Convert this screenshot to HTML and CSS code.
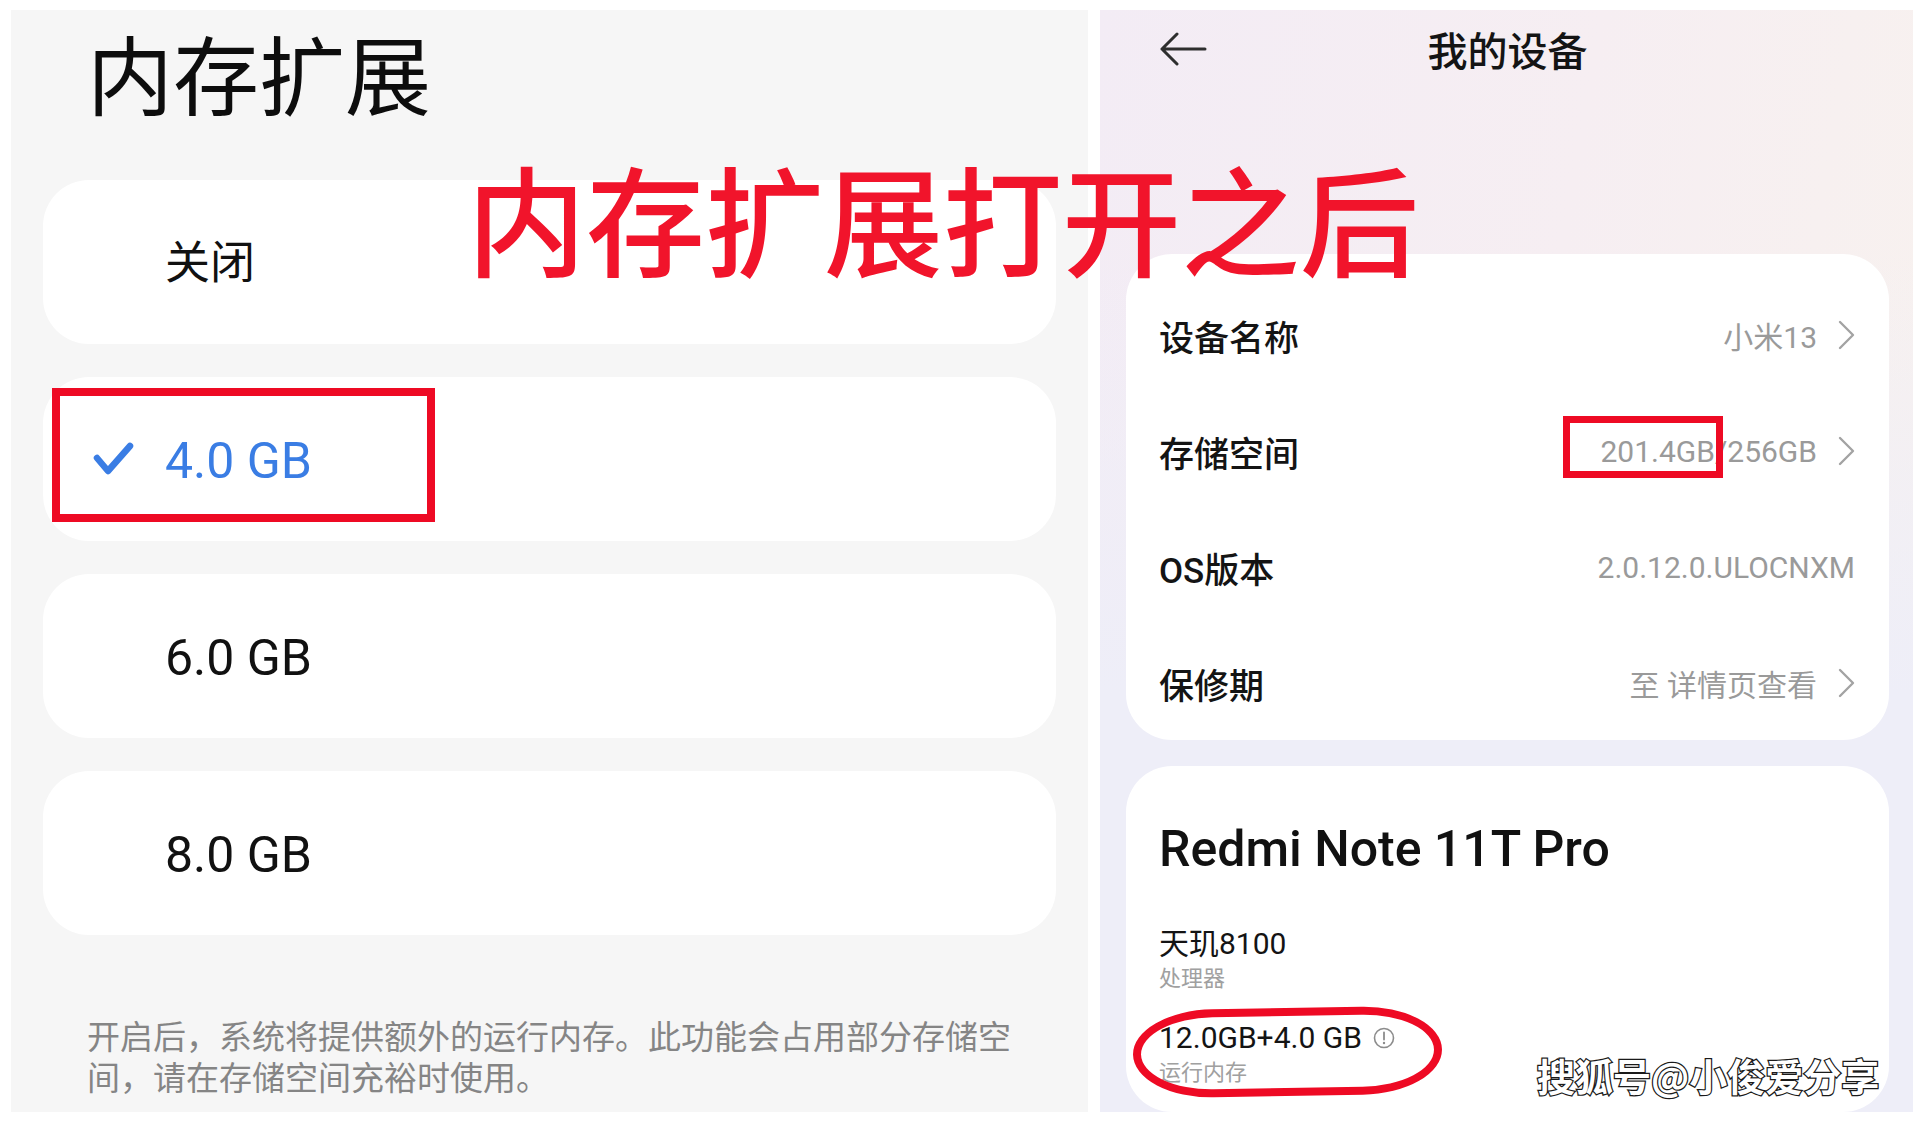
FILE: index.html
```html
<!DOCTYPE html>
<html lang="zh-CN">
<head>
<meta charset="utf-8">
<title>内存扩展 / 我的设备</title>
<link rel="stylesheet" href="styles.css">
</head>
<body>
<div class="canvas">
  <section class="panel settings">
    <h1 class="page-title">内存扩展</h1>
    <ul class="options">
      <li class="option"><span class="tick"></span><span class="opt-text cjk">关闭</span></li>
      <li class="option selected">
        <svg class="tick" viewBox="0 0 44 38"><polyline points="6,18 17,31 39,6" fill="none" stroke="#3a7de4" stroke-width="6.5" stroke-linecap="round" stroke-linejoin="round"/></svg>
        <span class="opt-text">4.0 GB</span>
      </li>
      <li class="option"><span class="tick"></span><span class="opt-text">6.0 GB</span></li>
      <li class="option"><span class="tick"></span><span class="opt-text">8.0 GB</span></li>
    </ul>
    <p class="note">开启后，系统将提供额外的运行内存。此功能会占用部分存储空间，请在存储空间充裕时使用。</p>
  </section>

  <section class="panel device">
    <header class="topbar">
      <svg class="back" viewBox="0 0 48 34"><path d="M46 17H3M18 2L3 17l15 15" fill="none" stroke="#2e2e2e" stroke-width="3" stroke-linecap="round" stroke-linejoin="round"/></svg>
      <h2 class="topbar-title">我的设备</h2>
      <span></span>
    </header>

    <div class="card info">
      <div class="row">
        <span class="row-label">设备名称</span>
        <span class="row-value">小米13<svg class="chev" viewBox="0 0 18 30"><polyline points="3,2 16,15 3,28" fill="none" stroke="#a3a3a3" stroke-width="2.4" stroke-linecap="round" stroke-linejoin="round"/></svg></span>
      </div>
      <div class="row">
        <span class="row-label">存储空间</span>
        <span class="row-value">201.4GB/256GB<svg class="chev" viewBox="0 0 18 30"><polyline points="3,2 16,15 3,28" fill="none" stroke="#a3a3a3" stroke-width="2.4" stroke-linecap="round" stroke-linejoin="round"/></svg></span>
      </div>
      <div class="row">
        <span class="row-label">OS版本</span>
        <span class="row-value">2.0.12.0.ULOCNXM</span>
      </div>
      <div class="row">
        <span class="row-label">保修期</span>
        <span class="row-value">至 详情页查看<svg class="chev" viewBox="0 0 18 30"><polyline points="3,2 16,15 3,28" fill="none" stroke="#a3a3a3" stroke-width="2.4" stroke-linecap="round" stroke-linejoin="round"/></svg></span>
      </div>
    </div>

    <div class="card specs">
      <div class="model">Redmi Note 11T Pro</div>
      <div class="spec">
        <div class="spec-main">天玑8100</div>
        <div class="spec-sub">处理器</div>
      </div>
      <div class="spec">
        <div class="spec-main">12.0GB+4.0 GB<svg class="info-icon" viewBox="0 0 22 22"><circle cx="11" cy="11" r="9.5" fill="none" stroke="#8c8c8c" stroke-width="1.6"/><line x1="11" y1="5.5" x2="11" y2="12.5" stroke="#8c8c8c" stroke-width="1.8" stroke-linecap="round"/><circle cx="11" cy="16" r="1.2" fill="#8c8c8c"/></svg></div>
        <div class="spec-sub">运行内存</div>
      </div>
    </div>
  </section>

  <div class="caption">内存扩展打开之后</div>
  <div class="mark mark-option"></div>
  <div class="mark mark-storage"></div>
  <div class="mark mark-ram"></div>
  <div class="watermark">搜狐号@小俊爱分享</div>
</div>
</body>
</html>
```

FILE: styles.css
```css
* {
  box-sizing: border-box;
  margin: 0;
  padding: 0;
}

html, body {
  width: 1925px;
  height: 1123px;
  overflow: hidden;
  background: #ffffff;
}

body {
  font-family: Roboto, "Noto Sans CJK SC", sans-serif;
  color: #111111;
}

.canvas {
  position: relative;
  width: 1925px;
  height: 1123px;
  display: flex;
  gap: 12px;
  padding: 10px 12px 11px 11px;
}

.panel {
  height: 1102px;
  overflow: hidden;
}

/* ---- left: memory extension settings ---- */
.settings {
  width: 1077px;
  background: #f6f6f6;
  padding: 19px 32px 0 32px;
}

.page-title {
  font-family: "Noto Sans CJK SC", sans-serif;
  font-size: 86px;
  line-height: 86px;
  font-weight: 400;
  padding-left: 44px;
  color: #0d0d0d;
}

.options {
  list-style: none;
  margin-top: 65px;
  display: flex;
  flex-direction: column;
  gap: 33px;
}

.option {
  height: 164px;
  background: #ffffff;
  border-radius: 46px;
  display: flex;
  align-items: center;
  padding-left: 48px;
}

.tick {
  flex: none;
  display: block;
  width: 44px;
  height: 38px;
  margin-right: 30px;
}

.opt-text {
  font-size: 50px;
  line-height: 1;
  color: #111111;
  padding-top: 3px;
}

.opt-text.cjk {
  font-size: 45px;
}

.option.selected .opt-text {
  color: #3a7de4;
}

.note {
  margin-top: 82px;
  padding: 0 29px 0 44px;
  font-size: 33px;
  line-height: 41px;
  color: #858585;
}

/* ---- right: my device ---- */
.device {
  width: 813px;
  padding: 0 24px 0 26px;
  display: flex;
  flex-direction: column;
  background:
    linear-gradient(180deg, rgba(238, 238, 248, 0) 0%, rgba(238, 238, 248, 0) 22%, #eeeef8 62%, #eeeef8 100%),
    linear-gradient(100deg, #f3ecf5 0%, #f6eef2 50%, #f8f2ee 100%);
}

.topbar {
  flex: none;
  height: 78px;
  display: grid;
  grid-template-columns: 1fr auto 1fr;
  align-items: center;
}

.back {
  display: block;
  width: 48px;
  height: 34px;
  margin-left: 33px;
}

.topbar-title {
  font-family: "Noto Sans CJK SC", sans-serif;
  font-size: 40px;
  line-height: 1;
  font-weight: 500;
  color: #141414;
}

.card {
  background: #ffffff;
  border-radius: 46px;
}

.info {
  flex: none;
  margin-top: 166px;
  height: 486px;
  padding: 23px 34px 0 33px;
}

.row {
  height: 116px;
  display: flex;
  align-items: center;
  justify-content: space-between;
}

.row-label {
  font-size: 35px;
  font-weight: 500;
  color: #141414;
}

.row-value {
  display: flex;
  align-items: center;
  gap: 20px;
  font-size: 30px;
  color: #9a9a9a;
}

.chev {
  display: block;
  width: 18px;
  height: 30px;
}

.specs {
  flex: 1;
  margin-top: 26px;
  padding: 53px 33px 0 33px;
}

.model {
  font-size: 50px;
  line-height: 60px;
  font-weight: 500;
  color: #111111;
}

.spec {
  margin-top: 47px;
}

.spec + .spec {
  margin-top: 27px;
}

.spec-main {
  display: flex;
  align-items: center;
  gap: 11px;
  font-size: 30px;
  line-height: 36px;
  color: #141414;
}

.info-icon {
  display: block;
  width: 22px;
  height: 22px;
}

.spec-sub {
  margin-top: 3px;
  font-size: 22px;
  line-height: 28px;
  color: #a0a0a0;
}

/* ---- annotations drawn over the screens ---- */
.caption {
  position: absolute;
  left: 467px;
  top: 157px;
  font-family: "Noto Sans CJK SC", sans-serif;
  font-size: 119px;
  line-height: 1;
  font-weight: 500;
  color: #f1142b;
  white-space: nowrap;
}

.mark {
  position: absolute;
  border: 8px solid #ee0a24;
}

.mark-option {
  left: 52px;
  top: 388px;
  width: 383px;
  height: 134px;
}

.mark-storage {
  left: 1563px;
  top: 416px;
  width: 160px;
  height: 62px;
  border-width: 7px;
}

.mark-ram {
  left: 1133px;
  top: 1008px;
  width: 309px;
  height: 88px;
  border-width: 8px;
  border-radius: 80px / 44px;
  transform: rotate(-1deg);
}

.watermark {
  position: absolute;
  left: 1537px;
  top: 1056px;
  font-family: "Noto Sans CJK SC", sans-serif;
  font-size: 38px;
  line-height: 1;
  font-weight: 700;
  color: #ffffff;
  -webkit-text-stroke: 2.5px #1a1a1a;
  paint-order: stroke fill;
  white-space: nowrap;
}
```
